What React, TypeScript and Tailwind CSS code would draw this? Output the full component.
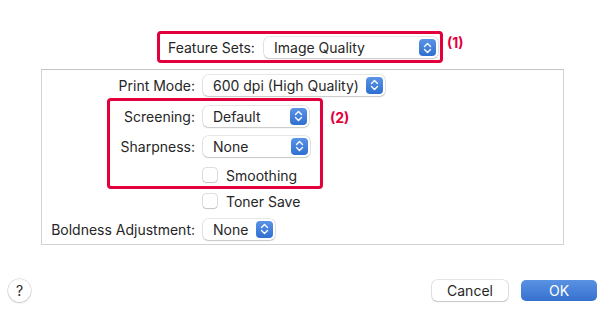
import React from 'react';

function Stepper() {
  return (
    <span className="flex h-[17px] w-[17px] items-center justify-center rounded-[4px] bg-gradient-to-b from-[#5a94e6] to-[#2f6fd0]">
      <svg width="9" height="12" viewBox="0 0 9 12" fill="none">
        <path d="M1.5 4.5L4.5 1.5L7.5 4.5" stroke="white" strokeWidth="1.4" strokeLinecap="round" strokeLinejoin="round" />
        <path d="M1.5 7.5L4.5 10.5L7.5 7.5" stroke="white" strokeWidth="1.4" strokeLinecap="round" strokeLinejoin="round" />
      </svg>
    </span>
  );
}

function Popup({ value, width }: { value: string; width: string }) {
  return (
    <div
      className={`flex h-[21px] ${width} items-center justify-between rounded-[5px] bg-white pl-[10px] pr-[2px] shadow-[0_0_0_0.5px_rgba(0,0,0,0.18),0_1px_1.5px_rgba(0,0,0,0.15)]`}
    >
      <span>{value}</span>
      <Stepper />
    </div>
  );
}

function Checkbox({ label }: { label: string }) {
  return (
    <div className="flex items-center gap-[9px]">
      <span className="h-[14px] w-[14px] rounded-[3px] bg-white shadow-[0_0_0_0.5px_rgba(0,0,0,0.25),0_1px_1px_rgba(0,0,0,0.12)]" />
      <span>{label}</span>
    </div>
  );
}

function Row({ label, children, className }: { label?: string; children: React.ReactNode; className: string }) {
  return (
    <div className={`flex h-[22px] items-center ${className}`}>
      <div className="w-[161px] whitespace-nowrap pr-[8px] text-right">{label}</div>
      {children}
    </div>
  );
}

export default function App() {
  return (
    <div
      className="relative h-[321px] w-[606px] bg-white text-[14px] text-[#262626]"
      style={{ fontFamily: 'Inter, "Liberation Sans", sans-serif' }}
    >
      {/* Feature sets */}
      <div className="flex items-start pl-[157px] pt-[31px]">
        <div className="flex h-[32px] w-[286px] items-center rounded-[4px] border-[3px] border-[#e2003c] pl-[8px] pt-[1px]">
          <span className="w-[96px]">Feature Sets:</span>
          <Popup value="Image Quality" width="w-[174px]" />
        </div>
        <span className="ml-[4px] mt-[1px] font-bold text-[#e2003c]">(1)</span>
      </div>

      {/* settings panel */}
      <div className="relative ml-[41px] mt-[6px] h-[176px] w-[523px] border border-[#d3d3d3] border-t-[#c4c4c4]">
        <Row label="Print Mode:" className="mt-[4px]">
          <Popup value="600 dpi (High Quality)" width="w-[182px]" />
        </Row>
        <Row label="Screening:" className="mt-[9px]">
          <Popup value="Default" width="w-[106px]" />
        </Row>
        <Row label="Sharpness:" className="mt-[8px]">
          <Popup value="None" width="w-[107px]" />
        </Row>
        <Row className="mt-[7px]">
          <Checkbox label="Smoothing" />
        </Row>
        <Row className="mt-[4px]">
          <Checkbox label="Toner Save" />
        </Row>
        <Row label="Boldness Adjustment:" className="mt-[6px]">
          <Popup value="None" width="w-[72px]" />
        </Row>

        {/* annotation (2) */}
        <div className="absolute left-[65px] top-[28px] h-[91px] w-[216px] rounded-[4px] border-[3px] border-[#e2003c]" />
        <span className="absolute left-[288px] top-[37px] font-bold text-[#e2003c]">(2)</span>
      </div>

      {/* bottom buttons */}
      <div className="mt-[34px] flex items-center px-[8px]">
        <span className="flex h-[23px] w-[23px] items-center justify-center rounded-full bg-white text-[14px] shadow-[0_0_0_0.5px_rgba(0,0,0,0.2),0_1px_1.5px_rgba(0,0,0,0.15)]">
          ?
        </span>
        <div className="ml-auto flex gap-[13px] pr-[1px]">
          <button className="h-[21px] w-[76px] rounded-[5px] bg-white shadow-[0_0_0_0.5px_rgba(0,0,0,0.2),0_1px_1.5px_rgba(0,0,0,0.15)]">
            Cancel
          </button>
          <button className="h-[21px] w-[76px] rounded-[5px] bg-gradient-to-b from-[#5a92e3] to-[#3571cf] text-white">
            OK
          </button>
        </div>
      </div>
    </div>
  );
}
